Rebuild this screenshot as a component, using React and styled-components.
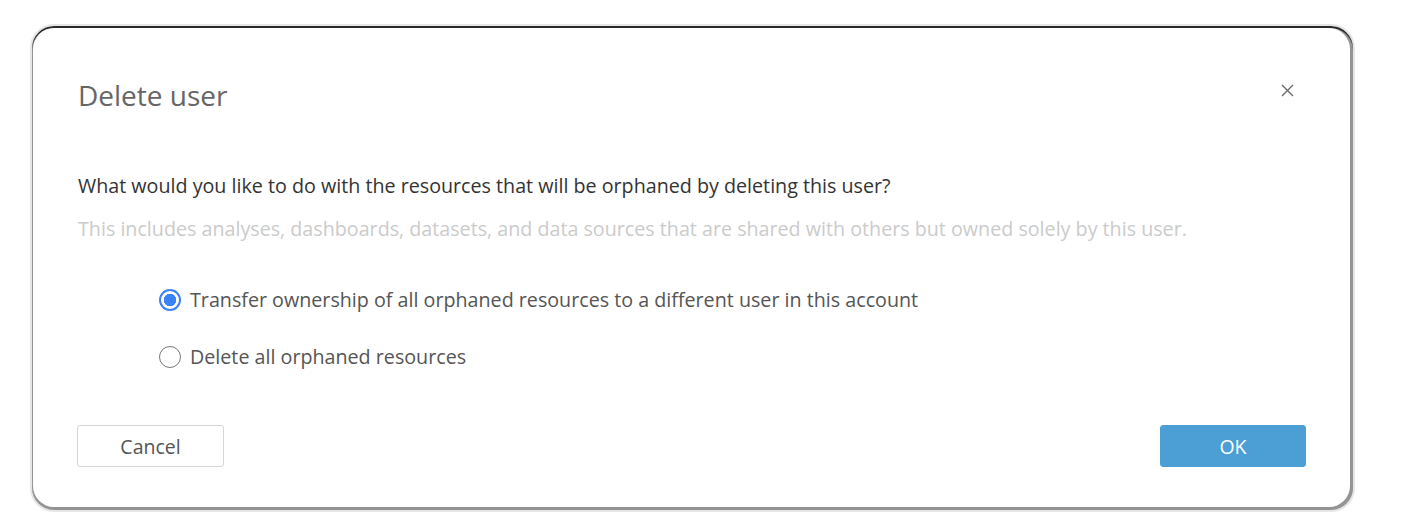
import styled, { createGlobalStyle } from "styled-components";
import { useState } from "react";

const GlobalStyle = createGlobalStyle`
  body {
    margin: 0;
    background: #ffffff;
    font-family: "Open Sans", "Liberation Sans", sans-serif;
  }
`;

const options = [
  { id: "transfer", label: "Transfer ownership of all orphaned resources to a different user in this account" },
  { id: "delete", label: "Delete all orphaned resources" }
];

export default function App() {
  const [choice, setChoice] = useState("transfer");

  return (
    <Page>
      <GlobalStyle />
      <Frame>
        <Dialog>
          <Header>
            <Title>Delete user</Title>
            <CloseButton aria-label="Close">
              <svg width="13" height="13" viewBox="0 0 13 13">
                <path d="M1 1 L12 12 M12 1 L1 12" stroke="#6b6b6b" strokeWidth="1.4" fill="none" />
              </svg>
            </CloseButton>
          </Header>

          <Question>What would you like to do with the resources that will be orphaned by deleting this user?</Question>
          <Hint>This includes analyses, dashboards, datasets, and data sources that are shared with others but owned solely by this user.</Hint>

          <Options>
            {options.map(opt => (
              <Option key={opt.id} onClick={() => setChoice(opt.id)}>
                <Radio checked={choice === opt.id} />
                <OptionLabel>{opt.label}</OptionLabel>
              </Option>
            ))}
          </Options>

          <Footer>
            <Button>Cancel</Button>
            <Button primary>OK</Button>
          </Footer>
        </Dialog>
      </Frame>
    </Page>
  );
}

const Page = styled.div`
  padding: 24px 48px 0 30px;
  width: 1402px;
  height: 530px;
  box-sizing: border-box;
`;

const Frame = styled.div`
  width: 1325px;
  box-sizing: border-box;
  border: 2px solid #e6e6e6;
  border-radius: 24px;
  background: #949494;
  padding: 2px 3px 3px 1px;
  box-shadow: inset 0 2px 0 #2b2b2b;
`;

const Dialog = styled.div`
  background: #ffffff;
  border-radius: 21px;
  padding: 49px 56px 40px 45px;
  display: flex;
  flex-direction: column;
`;

const Header = styled.div`
  display: flex;
  align-items: center;
  justify-content: space-between;
  margin-bottom: 60px;
`;

const Title = styled.h2`
  margin: 0;
  font-size: 28px;
  line-height: 36px;
  font-weight: 400;
  color: #666666;
`;

const CloseButton = styled.button`
  background: none;
  border: none;
  padding: 0;
  margin-top: -10px;
  display: flex;
  cursor: pointer;
`;

const Question = styled.p`
  margin: 0;
  font-size: 19.7px;
  line-height: 26px;
  color: #333333;
`;

const Hint = styled.p`
  margin: 17px 0 0;
  font-size: 19.7px;
  line-height: 26px;
  color: #cbcbcb;
`;

const Options = styled.div`
  display: flex;
  flex-direction: column;
  gap: 31px;
  margin: 45px 0 0 81px;
`;

const Option = styled.label`
  display: flex;
  align-items: center;
  gap: 9px;
  cursor: pointer;
`;

const Radio = styled.span`
  width: 22px;
  height: 22px;
  box-sizing: border-box;
  border-radius: 50%;
  border: ${p => (p.checked ? "2px solid #3b82f6" : "1.5px solid #777")};
  background: ${p => (p.checked ? "radial-gradient(circle, #3b82f6 0 6px, #fff 6.5px)" : "#fff")};
  flex-shrink: 0;
`;

const OptionLabel = styled.span`
  font-size: 19.7px;
  line-height: 26px;
  color: #555555;
`;

const Footer = styled.div`
  display: flex;
  justify-content: space-between;
  margin-top: 55px;
  margin-right: -12px;
`;

const Button = styled.button`
  width: ${p => (p.primary ? "146px" : "147px")};
  height: 42px;
  border-radius: 3px;
  font-family: inherit;
  font-size: 19.5px;
  cursor: pointer;
  border: 1px solid ${p => (p.primary ? "#4b9fd5" : "#d6d6d6")};
  background: ${p => (p.primary ? "#4b9fd5" : "#ffffff")};
  color: ${p => (p.primary ? "#ffffff" : "#555555")};
  margin-left: ${p => (p.primary ? "0" : "-1px")};
`;
